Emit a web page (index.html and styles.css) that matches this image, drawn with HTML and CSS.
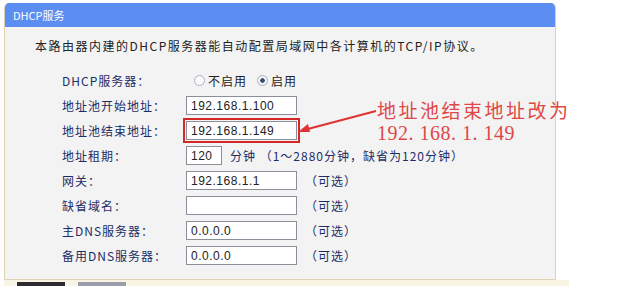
FILE: index.html
```html
<!DOCTYPE html>
<html lang="zh-CN">
<head>
    <meta charset="UTF-8">
    <title>DHCP服务</title>
    <link rel="stylesheet" href="styles.css">
</head>
<body>
    <div class="page">
        <div class="panel">
            <div class="panel-head">DHCP服务</div>
            <p class="intro">本路由器内建的DHCP服务器能自动配置局域网中各计算机的TCP/IP协议。</p>
            <div class="form">
                <label>DHCP服务器：</label>
                <div class="field">
                    <span class="radio"></span><span class="opt">不启用</span>
                    <span class="radio on"></span><span class="opt">启用</span>
                </div>

                <label>地址池开始地址：</label>
                <div class="field"><input class="ip" type="text" value="192.168.1.100"></div>

                <label>地址池结束地址：</label>
                <div class="field"><input class="ip marked" type="text" value="192.168.1.149"></div>

                <label>地址租期：</label>
                <div class="field">
                    <input class="short" type="text" value="120">
                    <span class="hint">分钟 （1～2880分钟，缺省为120分钟）</span>
                </div>

                <label>网关：</label>
                <div class="field"><input class="ip" type="text" value="192.168.1.1"><span class="hint">（可选）</span></div>

                <label>缺省域名：</label>
                <div class="field"><input class="ip" type="text" value=""><span class="hint">（可选）</span></div>

                <label>主DNS服务器：</label>
                <div class="field"><input class="ip" type="text" value="0.0.0.0"><span class="hint">（可选）</span></div>

                <label>备用DNS服务器：</label>
                <div class="field"><input class="ip" type="text" value="0.0.0.0"><span class="hint">（可选）</span></div>
            </div>
        </div>
        <div class="foot">
            <span class="btn dark"></span>
            <span class="btn grey"></span>
        </div>

        <!-- annotation drawn over the screenshot -->
        <svg class="arrow" width="90" height="40" viewBox="0 0 90 40">
            <line x1="6" y1="29" x2="78" y2="10" stroke="#e03232" stroke-width="2"/>
            <polygon points="0,31 10,23 12,31" fill="#e03232"/>
        </svg>
        <div class="note">
            <div class="note-title">地址池结束地址改为</div>
            <div class="note-ip">192. 168. 1. 149</div>
        </div>
    </div>
</body>
</html>
```

FILE: styles.css
```css
body {
    margin: 0;
    background: #fff;
    font-family: "Noto Sans CJK SC", "DejaVu Sans", sans-serif;
    font-size: 12px;
}
.page {
    position: relative;
    width: 620px;
    height: 286px;
    overflow: hidden;
}
.panel {
    margin: 3px 0 0 4px;
    width: 550px;
    height: 276px;
    border: 1px solid #ddd3b2;
    border-top: none;
    border-radius: 5px 5px 0 0;
    background: #f3f3f3;
    overflow: hidden;
}
.panel-head {
    height: 24px;
    line-height: 24px;
    padding-left: 8px;
    background: #5b8ef0;
    color: #fff;
    font-size: 11px;
}
.intro {
    margin: 10px 0 0 30px;
    line-height: 18px;
    letter-spacing: 1.5px;
    color: #222;
}
.form {
    display: grid;
    grid-template-columns: 124px 1fr;
    grid-auto-rows: 25px;
    margin-top: 13px;
    padding-left: 57px;
    letter-spacing: 1px;
}
.form label {
    line-height: 25px;
    color: #1c2d66;
}
.field {
    display: flex;
    align-items: center;
}
input {
    box-sizing: border-box;
    height: 19px;
    padding: 0 4px;
    border: 1px solid #8a8f9a;
    background: #fff;
    font-family: "Liberation Sans", sans-serif;
    font-size: 12px;
    letter-spacing: 0.5px;
    color: #222;
}
.ip {
    width: 111px;
}
.short {
    width: 36px;
}
.marked {
    outline: 2px solid #d42828;
    outline-offset: 1px;
}
.hint {
    margin-left: 8px;
    color: #1c2d66;
}
.radio {
    width: 9px;
    height: 9px;
    margin: 0 3px 0 8px;
    border: 1px solid #a8b0bc;
    border-radius: 50%;
    background: #fafafa;
}
.radio.on {
    margin-left: 10px;
    background: radial-gradient(circle, #3a4a70 0 2px, #f2f4f8 2.5px);
}
.opt {
    color: #222;
}
.foot {
    display: flex;
    gap: 13px;
    width: 552px;
    height: 10px;
    margin-left: 4px;
    padding: 2px 0 0 13px;
    background: #f9f5e4;
}
.btn {
    width: 48px;
    height: 10px;
}
.btn.dark {
    background: #2c2c30;
}
.btn.grey {
    background: #9a9caa;
}
.arrow {
    position: absolute;
    left: 298px;
    top: 101px;
}
.note {
    position: absolute;
    left: 377px;
    top: 97px;
    color: #e04848;
}
.note-title {
    font-size: 19px;
    line-height: 25px;
    letter-spacing: 2.5px;
}
.note-ip {
    font-family: "Liberation Serif", serif;
    font-size: 20px;
    line-height: 22px;
    letter-spacing: 0.5px;
}
```
